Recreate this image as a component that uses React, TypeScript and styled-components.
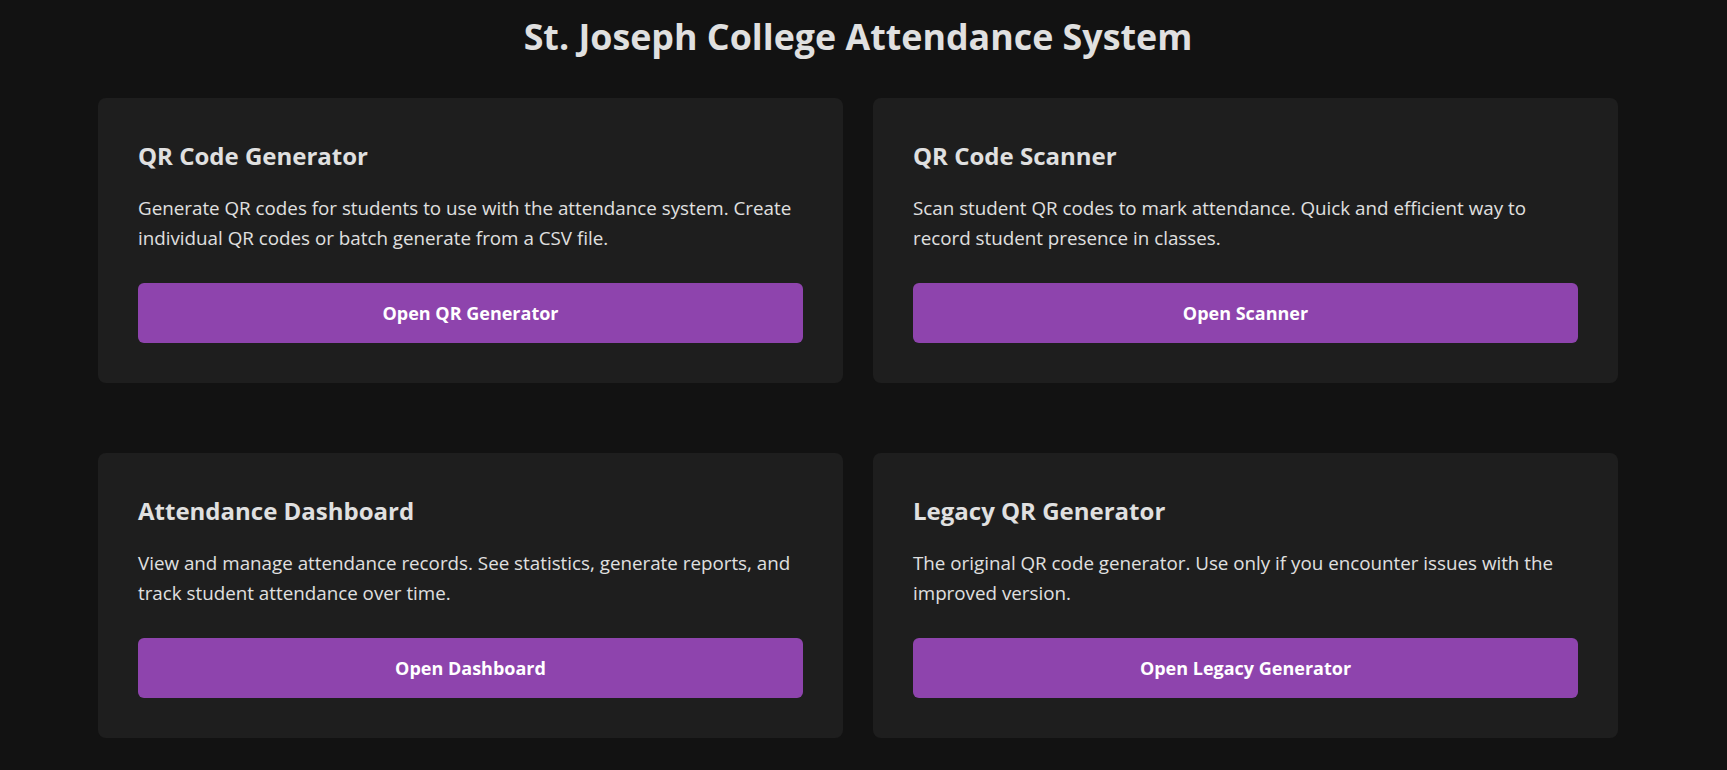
import { FunctionComponent } from 'react';
import styled, { createGlobalStyle } from 'styled-components';

const GlobalStyle = createGlobalStyle`
  * {
    box-sizing: border-box;
  }

  body {
    margin: 0;
    background: #121212;
    color: #e0e0e0;
    font-family: 'Open Sans', 'Noto Sans', sans-serif;
  }
`;

interface Tool {
  title: string;
  text: string;
  action: string;
}

const tools: Tool[] = [
  {
    title: 'QR Code Generator',
    text: 'Generate QR codes for students to use with the attendance system. Create individual QR codes or batch generate from a CSV file.',
    action: 'Open QR Generator',
  },
  {
    title: 'QR Code Scanner',
    text: 'Scan student QR codes to mark attendance. Quick and efficient way to record student presence in classes.',
    action: 'Open Scanner',
  },
  {
    title: 'Attendance Dashboard',
    text: 'View and manage attendance records. See statistics, generate reports, and track student attendance over time.',
    action: 'Open Dashboard',
  },
  {
    title: 'Legacy QR Generator',
    text: 'The original QR code generator. Use only if you encounter issues with the improved version.',
    action: 'Open Legacy Generator',
  },
];

const ToolCard: FunctionComponent<Tool> = ({ title, text, action }) => {
  return (
    <StyledCard>
      <StyledCardTitle>{title}</StyledCardTitle>
      <StyledCardText>{text}</StyledCardText>
      <StyledButton type="button">{action}</StyledButton>
    </StyledCard>
  );
};

const App: FunctionComponent = () => {
  return (
    <>
      <GlobalStyle />
      <StyledPage>
        <StyledHeading>St. Joseph College Attendance System</StyledHeading>
        <StyledGrid>
          {tools.map((tool) => (
            <ToolCard key={tool.title} {...tool} />
          ))}
        </StyledGrid>
      </StyledPage>
    </>
  );
};

export default App;

const StyledPage = styled.main`
  padding: 15px 11px 40px 0;
`;

const StyledHeading = styled.h1`
  margin: 0 0 40px;
  text-align: center;
  font-size: 35.8px;
  line-height: 43px;
  font-weight: 700;
  color: #e0e0e0;
`;

const StyledGrid = styled.section`
  display: grid;
  grid-template-columns: repeat(2, 745px);
  column-gap: 30px;
  row-gap: 70px;
  width: 1520px;
  margin: 0 auto;
`;

const StyledCard = styled.article`
  display: flex;
  flex-direction: column;
  padding: 40px;
  background: #1e1e1e;
  border-radius: 8px;
`;

const StyledCardTitle = styled.h2`
  margin: 0 0 20px;
  font-size: 24px;
  line-height: 36px;
  font-weight: 700;
  color: #e0e0e0;
`;

const StyledCardText = styled.p`
  margin: 0 0 30px;
  font-size: 18.8px;
  line-height: 29.5px;
  color: #e0e0e0;
`;

const StyledButton = styled.button`
  height: 60px;
  border: none;
  border-radius: 6px;
  background: #8e44ad;
  color: #ffffff;
  font-family: inherit;
  font-size: 18px;
  font-weight: 700;
  cursor: pointer;
`;
